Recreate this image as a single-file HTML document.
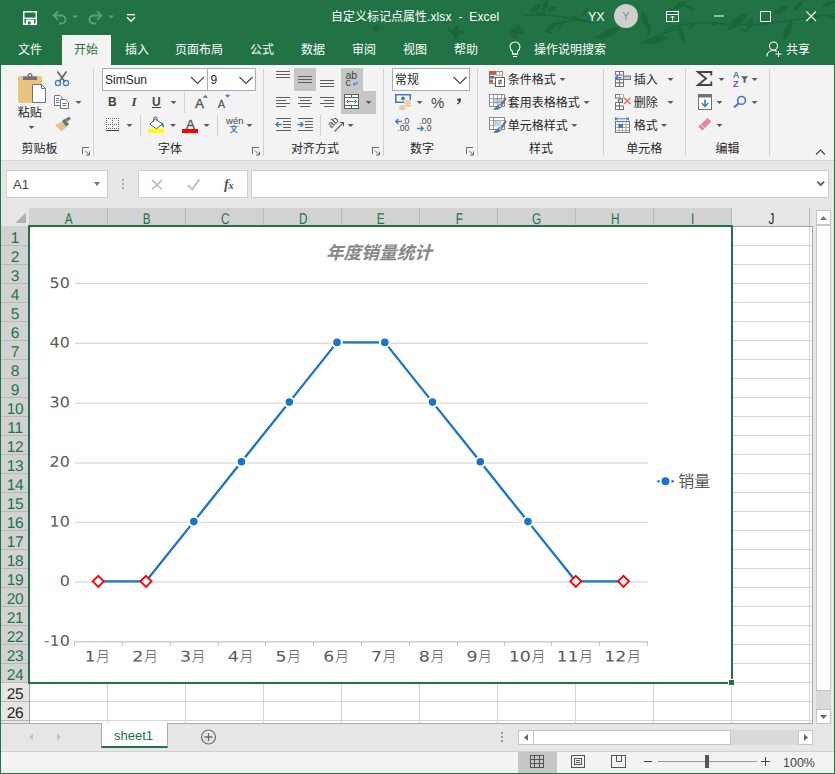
<!DOCTYPE html>
<html lang="zh-CN">
<head>
<meta charset="utf-8">
<title>自定义标记点属性.xlsx - Excel</title>
<style>
*{box-sizing:border-box;margin:0;padding:0}
html,body{width:835px;height:774px;overflow:hidden;background:#e6e6e6}
body{position:relative;font-family:"Liberation Sans","Noto Sans CJK SC",sans-serif;font-size:12px;color:#262626}
.abs{position:absolute}
#win{position:absolute;left:0;top:0;width:835px;height:774px;overflow:hidden}
#title{position:absolute;left:0;top:0;width:835px;height:65px;background:#217346;overflow:hidden}
.tt{position:absolute;color:#fff;font-size:12px;white-space:nowrap;line-height:16px}
.tab{position:absolute;top:41px;color:#fff;font-size:12px;white-space:nowrap;line-height:18px}
#tabact{position:absolute;left:62px;top:35px;width:49px;height:30px;background:#f3f3f3}
#ribbon{position:absolute;left:1px;top:65px;width:833px;height:96px;background:#f3f3f3;border-bottom:1px solid #d6d6d6}
.gl{position:absolute;font-size:12px;color:#444;white-space:nowrap;line-height:16px;top:76px}
.sep{position:absolute;top:7px;width:1px;height:83px;background:#d2d2d2}
.rt{position:absolute;font-size:12px;color:#262626;white-space:nowrap;line-height:16px}
.dd{position:absolute;width:0;height:0;border-left:3px solid transparent;border-right:3px solid transparent;border-top:3px solid #555}
#fbar{position:absolute;left:1px;top:161px;width:833px;height:48px;background:#e6e6e6}
.box{position:absolute;background:#fff;border:1px solid #d0d0d0}
#grid{position:absolute;left:1px;top:208px;width:833px;height:515px;background:#e6e6e6;overflow:visible;z-index:2}
.ch{position:absolute;top:0;height:18px;width:78px;text-align:center;font-size:15.500px;line-height:21px;color:#262626;border-right:1px solid #b8b8b8;overflow:hidden}
.ch span{display:inline-block;transform:translateX(.6px) rotate(0.03deg) scaleX(.76)}
.ch.sel{background:#d2d2d2;color:#217346}
.rh{position:absolute;left:0;width:28px;height:19px;text-align:center;font-size:15.500px;letter-spacing:-.3px;line-height:21px;transform:rotate(0.03deg);color:#262626;border-bottom:1px solid #b8b8b8;overflow:hidden}
.rh.sel{background:#d2d2d2;color:#217346}
#sheetbar{position:absolute;left:1px;top:723px;width:833px;height:29px;background:#e6e6e6;border-bottom:1px solid #cfcfcf}
#status{position:absolute;left:1px;top:752px;width:833px;height:21px;background:#f3f3f3}
</style>
</head>
<body>
<div id="win">
<!-- TITLE -->
<div id="title">
  <!-- leaf decoration -->
  <svg class="abs" style="left:0;top:0" width="835" height="65" viewBox="0 0 835 65">
    <path d="M530.6 12.5Q539.2 11.8 541.4 3.5Q532.8 4.2 530.6 12.5ZM542.6 12.6Q549.7 7.7 547.4 -0.6Q540.3 4.3 542.6 12.6ZM546.4 11.1Q553.5 13.2 557.6 6.9Q550.5 4.8 546.4 11.1ZM535.1 13.0Q540.3 17.9 546.9 15.0Q541.7 10.1 535.1 13.0ZM546.4 30.6Q555.9 30.1 559.6 21.4Q550.1 21.9 546.4 30.6ZM559.0 29.2Q565.5 26.0 565.0 18.8Q558.5 22.0 559.0 29.2ZM544.3 30.3Q547.8 35.3 553.7 33.7Q550.2 28.7 544.3 30.3ZM512.9 34.5Q521.5 35.3 525.1 27.5Q516.5 26.7 512.9 34.5ZM510.9 33.4Q512.1 38.3 517.1 38.6Q515.9 33.7 510.9 33.4ZM596.3 38.9Q612.0 39.3 621.7 27.1Q606.0 26.7 596.3 38.9ZM595.7 35.5Q598.5 40.6 604.3 40.5Q601.5 35.4 595.7 35.5ZM641.6 10.6Q639.4 22.1 648.4 29.4Q650.6 17.9 641.6 10.6ZM650.0 24.1Q645.1 29.3 648.0 35.9Q652.9 30.7 650.0 24.1ZM642.3 42.9Q657.2 45.9 669.7 37.1Q654.8 34.1 642.3 42.9ZM581.8 15.8Q587.7 14.2 588.2 8.2Q582.3 9.8 581.8 15.8ZM571.1 15.8Q573.5 20.6 578.9 20.2Q576.5 15.4 571.1 15.8ZM673.1 9.0Q682.5 9.3 686.9 1.0Q677.5 0.7 673.1 9.0ZM684.4 5.9Q688.6 11.8 695.6 10.1Q691.4 4.2 684.4 5.9ZM669.5 7.7Q668.5 14.0 674.5 16.3Q675.5 10.0 669.5 7.7ZM679.7 26.3Q676.7 36.4 684.3 43.7Q687.3 33.6 679.7 26.3ZM688.2 29.2Q694.2 28.7 695.8 22.8Q689.8 23.3 688.2 29.2ZM727.0 30.4Q742.1 28.1 747.0 13.6Q731.9 15.9 727.0 30.4ZM747.6 30.6Q754.7 25.7 752.4 17.4Q745.3 22.3 747.6 30.6ZM739.1 29.1Q743.4 33.4 748.9 30.9Q744.6 26.6 739.1 29.1ZM783.4 40.0Q793.9 32.7 792.6 20.0Q782.1 27.3 783.4 40.0ZM773.2 14.5Q783.8 14.8 788.8 5.5Q778.2 5.2 773.2 14.5ZM792.3 11.7Q801.5 9.5 803.7 0.3Q794.5 2.5 792.3 11.7ZM821.4 6.4Q829.7 8.7 834.6 1.6Q826.3 -0.7 821.4 6.4ZM824.1 16.0Q829.3 20.9 835.9 18.0Q830.7 13.1 824.1 16.0ZM808.8 23.8Q814.7 22.2 815.2 16.2Q809.3 17.8 808.8 23.8ZM760.7 19.5Q763.2 25.0 769.3 24.5Q766.8 19.0 760.7 19.5ZM710.3 25.7Q716.2 27.3 719.7 22.3Q713.8 20.7 710.3 25.7Z" fill="#1c653c"/>
    <path d="M368 26l6 1 4-3 1 3 6 1-7 2-3 4-1-4zM446 28l7 2 4-6 2 6 6 2-7 3-2 6-3-6zM509 30l6-2 5-4v6l5 4h-9l-3 4z" fill="#1c653c"/>
    <g fill="none" stroke="#1c653c" stroke-width="1.600">
      <path d="M524 16C545 12 565 18 590 22M548 28C560 22 570 20 580 20M665 30C690 20 710 22 735 25C770 26 800 18 835 14M640 44C655 36 668 32 680 28"/>
    </g>
  </svg>
  <div id="tabact"></div>
  <!-- QAT -->
  <svg class="abs" style="left:0;top:0" width="160" height="34" viewBox="0 0 160 34">
    <!-- save -->
    <path d="M23.750 11.750h12.500v12.500h-12.500z" fill="none" stroke="#fff" stroke-width="1.500"/>
    <rect x="24" y="17.600" width="12" height="1.300" fill="#fff"/>
    <rect x="26" y="19.500" width="8" height="5" fill="#fff"/>
    <rect x="28" y="21.500" width="2.500" height="3" fill="#217346"/>
    <!-- undo -->
    <g fill="none" stroke="#5f9c7c" stroke-width="1.900">
      <path d="M54 15.500h7.500a4 4 0 0 1 0 8h-2.500"/>
      <path d="M58 11.200l-4.300 4.300 4.300 4.300"/>
    </g>
    <path d="M72 15.500h6l-3 3z" fill="#5f9c7c"/>
    <!-- redo -->
    <g fill="none" stroke="#5f9c7c" stroke-width="1.900">
      <path d="M101 15.500h-7.500a4 4 0 0 0 0 8h2.500"/>
      <path d="M97 11.200l4.300 4.300-4.300 4.300"/>
    </g>
    <path d="M108 15.500h6l-3 3z" fill="#5f9c7c"/>
    <!-- customize -->
    <rect x="127" y="14" width="8" height="1.300" fill="#fff"/>
    <path d="M127 17.300l4 4 4-4" fill="none" stroke="#fff" stroke-width="1.300"/>
  </svg>
  <div class="tt" style="left:331px;top:9px">自定义标记点属性<span style="letter-spacing:.1px">.xlsx&nbsp; -&nbsp; Excel</span></div>
  <div class="tt" style="left:588px;top:9px;font-size:12.500px">YX</div>
  <div class="abs" style="left:614px;top:4px;width:24px;height:24px;border-radius:12px;background:#d0cfce;color:#7a8a9a;font-size:11px;line-height:24px;text-align:center">Y</div>
  <svg class="abs" style="left:660px;top:0" width="175" height="34" viewBox="660 0 175 34">
    <!-- ribbon display -->
    <rect x="666.500" y="11.500" width="12" height="10" fill="none" stroke="#fff" stroke-width="1"/>
    <path d="M666 14.500h13" stroke="#fff" stroke-width="1"/>
    <path d="M672.500 20.500v-4.500M670.500 18l2-2 2 2" fill="none" stroke="#fff" stroke-width="1"/>
    <!-- min -->
    <rect x="714" y="15.500" width="10" height="1" fill="#fff"/>
    <!-- max -->
    <rect x="760.500" y="11.500" width="10" height="10" fill="none" stroke="#fff" stroke-width="1"/>
    <!-- close -->
    <path d="M806.300 11.300l9.700 9.700M816 11.300l-9.700 9.700" stroke="#fff" stroke-width="1.150"/>
  </svg>
  <!-- tabs -->
  <div class="tab" style="left:18px">文件</div>
  <div class="tab" style="left:74px;color:#217346">开始</div>
  <div class="tab" style="left:125px">插入</div>
  <div class="tab" style="left:175px">页面布局</div>
  <div class="tab" style="left:250px">公式</div>
  <div class="tab" style="left:301px">数据</div>
  <div class="tab" style="left:352px">审阅</div>
  <div class="tab" style="left:403px">视图</div>
  <div class="tab" style="left:454px">帮助</div>
  <svg class="abs" style="left:506px;top:38px" width="20" height="24" viewBox="0 0 20 24">
    <path d="M6.500 13.500c-1.800-1.500-2.500-3-2.500-4.500a5 5 0 0 1 10 0c0 1.500-.7 3-2.500 4.500v2.500h-5z" fill="none" stroke="#fff" stroke-width="1.1"/>
    <path d="M6.500 16h5M7 18.500h4" stroke="#fff" stroke-width="1.1"/>
  </svg>
  <div class="tab" style="left:534px">操作说明搜索</div>
  <svg class="abs" style="left:764px;top:38px" width="22" height="24" viewBox="0 0 22 24">
    <circle cx="9.500" cy="8" r="4" fill="none" stroke="#fff" stroke-width="1.1"/>
    <path d="M3 18.500c0-4 3-6 6.500-6 1.500 0 2.500.4 3.300 1" fill="none" stroke="#fff" stroke-width="1.100"/>
    <path d="M14.500 13v6M11.500 16h6" stroke="#fff" stroke-width="1.1"/>
  </svg>
  <div class="tab" style="left:786px">共享</div>
</div>
<!-- RIBBON -->
<!--RIBBON-BEGIN--><div id="ribbon">
<svg class="abs" style="left:-1px;top:0" width="835" height="96" viewBox="0 65 835 96" font-family="'Liberation Sans','Noto Sans CJK SC',sans-serif" font-size="12" fill="#262626">
<g fill="#d0d0d0">
<rect x="93" y="69" width="1" height="87"/>
<rect x="263" y="69" width="1" height="87"/>
<rect x="383" y="69" width="1" height="87"/>
<rect x="477" y="69" width="1" height="87"/>
<rect x="603" y="69" width="1" height="87"/>
<rect x="685" y="69" width="1" height="87"/>
<rect x="769" y="69" width="1" height="87"/>
<rect x="184" y="92" width="1" height="21"/>
<rect x="140" y="115" width="1" height="21"/>
<rect x="217" y="115" width="1" height="21"/>
<rect x="320" y="115" width="1" height="21"/>
</g>
<rect x="294" y="68" width="22" height="23" fill="#c6c6c6"/>
<path d="M341 68h22v23h13v23h-35z" fill="#c6c6c6"/>
<g fill="#5a5a5a">
<path d="M28.5 126.0h6l-3 3z"/>
<path d="M75.5 101.0h6l-3 3z"/>
<path d="M170.5 101.0h6l-3 3z"/>
<path d="M126.5 124.0h6l-3 3z"/>
<path d="M170.0 124.0h6l-3 3z"/>
<path d="M203.6 124.0h6l-3 3z"/>
<path d="M246.5 124.0h6l-3 3z"/>
<path d="M365.6 101.0h6l-3 3z"/>
<path d="M347.6 124.0h6l-3 3z"/>
<path d="M416.6 101.0h6l-3 3z"/>
<path d="M559.5 78.0h6l-3 3z"/>
<path d="M583.6 101.0h6l-3 3z"/>
<path d="M571.3 124.0h6l-3 3z"/>
<path d="M667.5 78.0h6l-3 3z"/>
<path d="M667.5 101.0h6l-3 3z"/>
<path d="M661.0 124.0h6l-3 3z"/>
<path d="M718.5 78.0h6l-3 3z"/>
<path d="M751.6 78.0h6l-3 3z"/>
<path d="M716.5 101.0h6l-3 3z"/>
<path d="M751.6 101.0h6l-3 3z"/>
<path d="M716.5 124.0h6l-3 3z"/>
</g>
<g fill="none" stroke="#6a6a6a" stroke-width="1">
<path d="M82.5 154v-6.500h6.500M85.0 150.500l4.500 4.500M89.5 151.500v3.500h-3.500"/>
<path d="M252.5 154v-6.500h6.500M255.0 150.500l4.500 4.500M259.5 151.500v3.500h-3.500"/>
<path d="M372.5 154v-6.500h6.500M375.0 150.500l4.500 4.500M379.5 151.500v3.500h-3.500"/>
<path d="M466.5 154v-6.500h6.500M469.0 150.500l4.500 4.500M473.5 151.500v3.500h-3.500"/>
</g>
<path d="M816 154.500l4.500-4.500 4.500 4.500" fill="none" stroke="#444" stroke-width="1.100"/>
<rect x="18" y="76" width="24" height="27" rx="2" fill="#eac282"/>
<path d="M23 80v-3.500h4.500v-1a2.500 2.500 0 0 1 5 0v1h4.500v3.500z" fill="#737373"/>
<circle cx="30" cy="75.300" r="1.100" fill="#f3f3f3"/>
<path d="M32.500 84.500h9l4 4v14h-13z" fill="#fff" stroke="#737373"/>
<path d="M41.500 84.500v4h4" fill="none" stroke="#737373"/>
<text x="17.800" y="116.500">粘贴</text>
<path d="M57.500 71.500l7.500 10.500M66.500 71.500l-7.500 10.500" stroke="#5f5f5f" stroke-width="1.600" fill="none"/>
<circle cx="58" cy="83" r="2.600" fill="none" stroke="#3f7dc1" stroke-width="1.300"/><circle cx="66" cy="83" r="2.600" fill="none" stroke="#3f7dc1" stroke-width="1.300"/>
<path d="M54.500 95.500h5.500l2 2v8h-7.500z" fill="#fff" stroke="#737373"/>
<path d="M60.500 99.500h5l3 3v6h-8z" fill="#fff" stroke="#737373"/>
<path d="M56 98.500h3M56 100.500h3M56 102.500h3M62.500 103.500h4M62.500 105.500h4" stroke="#3f7dc1"/>
<path d="M55 125l9-4.500 3.500 5.500-6 5.500z" fill="#eac282"/>
<path d="M62 121l3-2.500 4 6-3 2z" fill="#737373"/><path d="M65.500 119l3.500-2.500 1.800 2.600-3.500 2.500z" fill="#737373"/>
<text x="21.500" y="152.800">剪贴板</text>
<rect x="102.500" y="68.500" width="105" height="22" fill="#fff" stroke="#ababab"/>
<rect x="207.500" y="68.500" width="48" height="22" fill="#fff" stroke="#ababab"/>
<path d="M191 77l6.500 6.500 6.500-6.500M239.500 77l6.500 6.500 6.500-6.500" fill="none" stroke="#444" stroke-width="1.100"/>
<text x="105" y="84">SimSun</text><text x="210.500" y="84">9</text>
<g fill="#444">
<text x="108" y="105.800" font-weight="bold" font-size="12">B</text>
<text x="131.500" y="105.800" font-style="italic" font-size="13" font-family="'Liberation Serif',serif" font-weight="bold">I</text>
<text x="152" y="105.800" font-weight="bold" font-size="12">U</text>
<rect x="152" y="107" width="9" height="1"/>
</g>
<text x="195" y="107.800" font-size="13.500" fill="#5a5a5a" stroke="#5a5a5a" stroke-width=".35">A</text>
<text x="217.700" y="107.800" font-size="11" fill="#5a5a5a" stroke="#5a5a5a" stroke-width=".3">A</text>
<path d="M202.800 97.800h5.200l-2.600-3z" fill="#3f7dc1"/><path d="M225 94.800h5.200l-2.600 3z" fill="#3f7dc1"/>
<g stroke="#6a6a6a" stroke-width="1" stroke-dasharray="1 1" fill="none"><path d="M106.500 118v11M112.500 118v11M118.500 118v11M106 118.500h13M106 124.500h13M106 128.500h13"/></g>
<rect x="106" y="130" width="13" height="1" fill="#444"/>
<path d="M155.200 118.800l7 5.300-5.800 4.800-6.400-4.700z" fill="#fff" stroke="#5a5a5a"/>
<path d="M153.700 122v-3.500a1.600 1.600 0 0 1 3.200 0v2" fill="none" stroke="#5a5a5a"/>
<path d="M161.600 122c1.800 1.200 2.600 3 2.300 5.400-1.400-.6-2.300-1.600-2.500-3.200z" fill="#3f7dc1"/>
<rect x="148" y="129" width="16" height="4" fill="#ffff00"/>
<text x="190.500" y="128.800" font-size="13.500" fill="#5a5a5a" text-anchor="middle" stroke="#5a5a5a" stroke-width=".35">A</text>
<rect x="182" y="129" width="16" height="4" fill="#ff0000"/>
<text x="234.800" y="124" font-size="9.500" fill="#444" text-anchor="middle">wén</text>
<text x="233.800" y="132.300" font-size="8" fill="#3f7dc1" text-anchor="middle" font-weight="bold">文</text>
<text x="158" y="152.800">字体</text>
<g stroke="#5f5f5f" stroke-width="1" fill="none">
<path d="M276 71.500h14M276 74.500h14M276 77.500h14"/>
<path d="M298 76.500h14M298 79.500h14M298 82.500h14"/>
<path d="M320 80.500h14M320 83.500h14M320 86.500h14"/>
<path d="M276 97.500h14M276 100.500h10M276 103.500h14M276 106.500h10"/>
<path d="M298 97.500h14M300 100.500h10M298 103.500h14M300 106.500h10"/>
<path d="M320 97.500h14M324 100.500h10M320 103.500h14M324 106.500h10"/>
<path d="M276 118.500h15M283 121.500h8M283 124.500h8M283 127.500h8M276 130.500h15"/>
<path d="M298 118.500h15M305 121.500h8M305 124.500h8M305 127.500h8M298 130.500h15"/>
</g>
<g stroke="#3f7dc1" stroke-width="1.300" fill="none"><path d="M281.500 124.500h-5.500M278.500 122l-2.500 2.500 2.500 2.500"/><path d="M297.500 124.500h5.500M300.500 122l2.500 2.500-2.500 2.500"/></g>
<text x="345.500" y="78.600" font-size="10.500" fill="#444">ab</text><text x="345.500" y="85.700" font-size="10.500" fill="#444">c</text>
<path d="M357 81.500v2.500h-3.500M355 82.500l-1.700 1.500 1.700 1.500" fill="none" stroke="#3f7dc1" stroke-width="1"/>
<rect x="344.500" y="94.500" width="14" height="14" fill="#fff" stroke="#5f5f5f"/>
<path d="M344.500 97.500h14M344.500 105.500h14M351.500 94.500v3M351.500 105.500v3" stroke="#5f5f5f" fill="none"/>
<path d="M346.500 101.500h10M348.500 99.500l-2 2 2 2M354.500 99.500l2 2-2 2" fill="none" stroke="#3f7dc1" stroke-width="1"/>
<text transform="translate(331.300,128.500) rotate(-45)" font-size="10" fill="#444">ab</text>
<path d="M334.500 131.500l9-9M339.800 122.500h3.700v3.700" fill="none" stroke="#5f5f5f" stroke-width="1.100"/>
<text x="291" y="152.800">对齐方式</text>
<rect x="392.500" y="68.500" width="77" height="22" fill="#fff" stroke="#ababab"/>
<path d="M453.500 77l6.500 6.500 6.500-6.500" fill="none" stroke="#444" stroke-width="1.100"/>
<text x="395" y="84.300">常规</text>
<path d="M395.800 94.800h14.400v7.400h-14.400z" fill="#fff" stroke="#3f7dc1" stroke-width="1.600"/>
<path d="M395 94h2.500l-2.500 2.500zM411 94h-2.500l2.500 2.500zM395 103h2.500l-2.500-2.500z" fill="#3f7dc1"/>
<circle cx="403" cy="98.500" r="2" fill="#3f7dc1"/>
<g fill="#eac282" stroke="#f3f3f3" stroke-width=".7"><ellipse cx="407.600" cy="101.200" rx="3.600" ry="1.500"/><ellipse cx="407.600" cy="103.400" rx="3.600" ry="1.500"/><ellipse cx="407.600" cy="105.600" rx="3.600" ry="1.500"/><ellipse cx="402.300" cy="106.400" rx="3.600" ry="1.500"/><ellipse cx="402.300" cy="108.600" rx="3.600" ry="1.500"/></g>
<text x="431" y="107.800" font-size="15" fill="#444">%</text>
<path d="M457.500 98.500h3.500c.3 2.800-.8 4.800-3.600 6l-.6-1c1.400-.6 2.100-1.400 2.100-2.400h-1.400z" fill="#444"/>
<g font-size="8.700" fill="#444" text-anchor="end"><text x="409.300" y="123.600">.0</text><text x="409.300" y="130.700">.00</text><text x="431.500" y="123.600">.00</text><text x="431.500" y="130.700">.0</text></g>
<path d="M402 121.500h-6M398.300 119l-2.600 2.500 2.600 2.500" fill="none" stroke="#3f7dc1" stroke-width="1.300"/>
<path d="M417 128.500h6M420.700 126l2.600 2.500-2.600 2.500" fill="none" stroke="#3f7dc1" stroke-width="1.300"/>
<text x="410" y="152.800">数字</text>
<rect x="489.500" y="71.500" width="13" height="12" fill="#fff" stroke="#8a8a8a"/>
<path d="M496.500 71.500v4M499.500 71.500v4M496 75.500h7" stroke="#b5b5b5" fill="none"/>
<rect x="489" y="71" width="7" height="3.800" fill="#d8553a"/><rect x="489" y="75.800" width="5.500" height="2.800" fill="#3f7dc1"/><rect x="489" y="79.600" width="4" height="3.200" fill="#d8553a"/>
<rect x="495.500" y="77.500" width="9" height="9" fill="#fff" stroke="#5f5f5f"/>
<path d="M498 80.800h4M498 83.200h4M501 79.500l-2 5" stroke="#444" stroke-width=".9" fill="none"/>
<rect x="489.500" y="94.5" width="15" height="12" fill="#fff" stroke="#8a8a8a"/>
<rect x="493" y="98.0" width="8" height="5.500" fill="#bdd3ea"/>
<path d="M489.500 98.500h15M489.500 102.500h15M493.500 94.500v12M497.500 94.500v12M501.500 94.500v12" stroke="#8a8a8a" fill="none" opacity=".75"/>
<path d="M505.500 97.0l-5 6.800 2 1.600 4-6.500z" fill="#737373"/>
<path d="M500 104.0c-2.500.4-3.200 3-7 5.400 3.500 1.200 7.600.2 9.600-3.600z" fill="#3f7dc1"/>
<circle cx="500" cy="106.1" r=".9" fill="#fff"/>
<rect x="489.500" y="117.5" width="15" height="12" fill="#fff" stroke="#8a8a8a"/>
<rect x="493" y="121.0" width="8" height="5.500" fill="#bdd3ea"/>
<path d="M489.500 120.500h15M493.500 117.500v12M489.500 125.500h4" stroke="#8a8a8a" fill="none" opacity=".75"/>
<path d="M505.500 120.0l-5 6.800 2 1.600 4-6.500z" fill="#737373"/>
<path d="M500 127.0c-2.500.4-3.200 3-7 5.400 3.500 1.200 7.600.2 9.600-3.600z" fill="#3f7dc1"/>
<circle cx="500" cy="129.1" r=".9" fill="#fff"/>
<text x="507.800" y="83.800">条件格式</text><text x="507.800" y="106.800">套用表格格式</text><text x="507.800" y="129.800">单元格样式</text>
<text x="529" y="152.800">样式</text>
<g fill="#fff" stroke="#737373">
<rect x="615.500" y="71.500" width="4" height="3.500"/><rect x="619.500" y="71.500" width="4" height="3.500"/>
<rect x="615.500" y="79.500" width="4" height="3.500"/><rect x="619.500" y="79.500" width="4" height="3.500"/><rect x="615.500" y="83" width="4" height="3.500"/><rect x="619.500" y="83" width="4" height="3.500"/>
<rect x="623.500" y="76" width="7" height="3.500" fill="#bdd3ea"/>
</g>
<path d="M621.500 77.800h-6M618 75.300l-2.600 2.500 2.600 2.500" fill="none" stroke="#3f7dc1" stroke-width="1.400"/>
<g fill="#fff" stroke="#737373">
<rect x="615.500" y="94.500" width="4" height="3.500"/><rect x="619.500" y="94.500" width="4" height="3.500" stroke-dasharray="1 1"/>
<rect x="615.500" y="102.500" width="4" height="3.500"/><rect x="615.500" y="106" width="4" height="3.500"/><rect x="619.500" y="106" width="4" height="3.500"/>
<rect x="618.500" y="99" width="4" height="3.500" fill="#bdd3ea"/>
</g>
<path d="M624 97.800l6.500 6.200M630.500 97.800l-6.500 6.200" stroke="#e0714f" stroke-width="1.500" fill="none"/>
<rect x="615.500" y="121.500" width="14" height="11" fill="#fff" stroke="#737373"/>
<path d="M615.500 124.500h14M615.500 127.500h14M615.500 130.500h14M619 121.500v11M622.500 121.500v11M626 121.500v11" stroke="#8a8a8a" fill="none" opacity=".7"/>
<rect x="618.500" y="124" width="4.500" height="4" fill="#3f7dc1"/>
<path d="M615.500 118.800h13M615.500 117.300v3M628.500 117.300v3M617.500 117.500l-1.500 1.300 1.500 1.300M626.500 117.500l1.500 1.300-1.500 1.300" stroke="#3f7dc1" fill="none"/>
<text x="633.700" y="83.800">插入</text><text x="633.700" y="106.800">删除</text><text x="633.700" y="129.800">格式</text>
<text x="626.300" y="152.800">单元格</text>
<path d="M711.300 75.500v-3.500h-13.300l8 6.500-8 6.500h13.300v-3.500" fill="none" stroke="#444" stroke-width="1.900" stroke-linejoin="miter"/>
<text x="732.700" y="77.600" font-size="9.200" font-weight="bold" fill="#3f7dc1">A</text><text x="733" y="86.900" font-size="9.200" font-weight="bold" fill="#8b44ac">Z</text>
<path d="M741 76.300h7.200l-2.600 3v3.400h-2v-3.400z" fill="#5f5f5f"/>
<rect x="698.500" y="94.500" width="13" height="15" fill="#fff" stroke="#737373"/><rect x="698" y="94" width="14" height="3.500" fill="#737373"/>
<path d="M705 99.500v7M701.700 103l3.300 3.600 3.300-3.600" fill="none" stroke="#3f7dc1" stroke-width="1.600"/>
<circle cx="741.500" cy="100.400" r="3.900" fill="none" stroke="#3f7dc1" stroke-width="1.600"/><path d="M738.800 103.300l-4.800 4" stroke="#3f7dc1" stroke-width="2.100"/>
<path d="M707.600 118l3.600 3.500-8.600 9-4.400-3.700z" fill="#e8849a"/><path d="M700.300 124.200l4.300 4" stroke="#f3f3f3" stroke-width=".9"/>
<text x="715.500" y="152.800">编辑</text>
</svg>
</div><!--RIBBON-END-->
<!-- FORMULA BAR -->
<div id="fbar">
<div class="box" style="left:5px;top:9px;width:102px;height:28px"></div>
<div class="rt" style="left:12px;top:16px;font-size:13px;color:#444">A1</div>
<div class="dd" style="left:93px;top:21px;border-left-width:3.5px;border-right-width:3.5px;border-top:4px solid #777"></div>
<div class="abs" style="left:121px;top:18px;width:2px;height:2px;background:#b0b0b0;box-shadow:0 4px 0 #b0b0b0,0 8px 0 #b0b0b0"></div>
<div class="box" style="left:137px;top:9px;width:110px;height:28px"></div>
<svg class="abs" style="left:137px;top:9px" width="110" height="28" viewBox="0 0 110 28">
  <path d="M14 10.200l10 9.300M24 10.200l-10 9.300" stroke="#bdbdbd" stroke-width="1.700" fill="none"/>
  <path d="M50 15l4 4.300 7.500-10" stroke="#c4c4c4" stroke-width="2.200" fill="none"/>
</svg>
<div class="rt" style="left:223px;top:15px;font-size:14.500px;font-style:italic;font-family:'Liberation Serif',serif;color:#555;letter-spacing:-.5px;font-weight:bold">f<span style="font-size:11px">x</span></div>
<div class="box" style="left:250px;top:9px;width:578px;height:28px"></div>
<svg class="abs" style="left:813px;top:17px" width="14" height="12" viewBox="0 0 14 12"><path d="M3.300 3.600l3.400 3.400 3.400-3.400" fill="none" stroke="#666" stroke-width="2"/></svg>
</div>
<!-- GRID -->
<!--GRID-BEGIN--><div id="grid">
<div class="abs" style="left:29px;top:19px;width:783px;height:496px;background:#fff"></div>
<div class="ch sel" style="left:28px;width:79px"><span>A</span></div>
<div class="ch sel" style="left:107px;width:78px"><span>B</span></div>
<div class="ch sel" style="left:185px;width:78px"><span>C</span></div>
<div class="ch sel" style="left:263px;width:78px"><span>D</span></div>
<div class="ch sel" style="left:341px;width:78px"><span>E</span></div>
<div class="ch sel" style="left:419px;width:78px"><span>F</span></div>
<div class="ch sel" style="left:497px;width:78px"><span>G</span></div>
<div class="ch sel" style="left:575px;width:78px"><span>H</span></div>
<div class="ch sel" style="left:653px;width:78px"><span>I</span></div>
<div class="ch" style="left:731px;width:78px"><span>J</span></div>
<div class="rh sel" style="top:18px;height:20px;line-height:23px">1</div>
<div class="rh sel" style="top:38px;height:19px">2</div>
<div class="rh sel" style="top:57px;height:19px">3</div>
<div class="rh sel" style="top:76px;height:19px">4</div>
<div class="rh sel" style="top:95px;height:19px">5</div>
<div class="rh sel" style="top:114px;height:19px">6</div>
<div class="rh sel" style="top:133px;height:19px">7</div>
<div class="rh sel" style="top:152px;height:19px">8</div>
<div class="rh sel" style="top:171px;height:19px">9</div>
<div class="rh sel" style="top:190px;height:19px">10</div>
<div class="rh sel" style="top:209px;height:19px">11</div>
<div class="rh sel" style="top:228px;height:19px">12</div>
<div class="rh sel" style="top:247px;height:19px">13</div>
<div class="rh sel" style="top:266px;height:19px">14</div>
<div class="rh sel" style="top:285px;height:19px">15</div>
<div class="rh sel" style="top:304px;height:19px">16</div>
<div class="rh sel" style="top:323px;height:19px">17</div>
<div class="rh sel" style="top:342px;height:19px">18</div>
<div class="rh sel" style="top:361px;height:19px">19</div>
<div class="rh sel" style="top:380px;height:19px">20</div>
<div class="rh sel" style="top:399px;height:19px">21</div>
<div class="rh sel" style="top:418px;height:19px">22</div>
<div class="rh sel" style="top:437px;height:19px">23</div>
<div class="rh sel" style="top:456px;height:19px">24</div>
<div class="rh" style="top:475px;height:19px">25</div>
<div class="rh" style="top:494px;height:19px">26</div>
<svg class="abs" style="left:0;top:0" width="833" height="515"><g fill="#d4d4d4"><rect x="29" y="37" width="783" height="1"/><rect x="29" y="56" width="783" height="1"/><rect x="29" y="75" width="783" height="1"/><rect x="29" y="94" width="783" height="1"/><rect x="29" y="113" width="783" height="1"/><rect x="29" y="132" width="783" height="1"/><rect x="29" y="151" width="783" height="1"/><rect x="29" y="170" width="783" height="1"/><rect x="29" y="189" width="783" height="1"/><rect x="29" y="208" width="783" height="1"/><rect x="29" y="227" width="783" height="1"/><rect x="29" y="246" width="783" height="1"/><rect x="29" y="265" width="783" height="1"/><rect x="29" y="284" width="783" height="1"/><rect x="29" y="303" width="783" height="1"/><rect x="29" y="322" width="783" height="1"/><rect x="29" y="341" width="783" height="1"/><rect x="29" y="360" width="783" height="1"/><rect x="29" y="379" width="783" height="1"/><rect x="29" y="398" width="783" height="1"/><rect x="29" y="417" width="783" height="1"/><rect x="29" y="436" width="783" height="1"/><rect x="29" y="455" width="783" height="1"/><rect x="29" y="474" width="783" height="1"/><rect x="29" y="493" width="783" height="1"/><rect x="29" y="512" width="783" height="1"/><rect x="106" y="19" width="1" height="496"/><rect x="184" y="19" width="1" height="496"/><rect x="262" y="19" width="1" height="496"/><rect x="340" y="19" width="1" height="496"/><rect x="418" y="19" width="1" height="496"/><rect x="496" y="19" width="1" height="496"/><rect x="574" y="19" width="1" height="496"/><rect x="652" y="19" width="1" height="496"/><rect x="730" y="19" width="1" height="496"/><rect x="808" y="19" width="1" height="496"/></g><rect x="29" y="18" width="783" height="1" fill="#9e9e9e"/><rect x="28" y="19" width="1" height="496" fill="#9e9e9e"/><rect x="811" y="18" width="1" height="497" fill="#a6a6a6"/><path d="M25 4.500v10.500h-10.500z" fill="#b1b1b1"/></svg>
<!--CHART-BEGIN--><svg class="abs" style="left:-1px;top:-208px" width="835" height="774" viewBox="0 0 835 774" font-family="'DejaVu Sans','Noto Sans CJK SC',sans-serif">
<rect x="30" y="227" width="701" height="455" fill="#fff"/>
<rect x="75" y="282.75" width="573" height="1.3" fill="#d9d9d9"/>
<rect x="75" y="342.65" width="573" height="1.3" fill="#d9d9d9"/>
<rect x="75" y="402.55" width="573" height="1.3" fill="#d9d9d9"/>
<rect x="75" y="462.35" width="573" height="1.3" fill="#d9d9d9"/>
<rect x="75" y="521.65" width="573" height="1.3" fill="#d9d9d9"/>
<rect x="75" y="581.25" width="573" height="1.3" fill="#d9d9d9"/>
<rect x="75" y="641.15" width="573" height="1.3" fill="#c6c6c6"/>
<rect x="74" y="641" width="1" height="5" fill="#c6c6c6"/>
<rect x="122" y="641" width="1" height="5" fill="#c6c6c6"/>
<rect x="170" y="641" width="1" height="5" fill="#c6c6c6"/>
<rect x="218" y="641" width="1" height="5" fill="#c6c6c6"/>
<rect x="265" y="641" width="1" height="5" fill="#c6c6c6"/>
<rect x="313" y="641" width="1" height="5" fill="#c6c6c6"/>
<rect x="361" y="641" width="1" height="5" fill="#c6c6c6"/>
<rect x="409" y="641" width="1" height="5" fill="#c6c6c6"/>
<rect x="457" y="641" width="1" height="5" fill="#c6c6c6"/>
<rect x="504" y="641" width="1" height="5" fill="#c6c6c6"/>
<rect x="551" y="641" width="1" height="5" fill="#c6c6c6"/>
<rect x="599" y="641" width="1" height="5" fill="#c6c6c6"/>
<rect x="647" y="641" width="1" height="5" fill="#c6c6c6"/>
<text transform="translate(69.800,287.9) rotate(0.03) scale(1.10,1.00)" text-anchor="end" font-size="14.5" fill="#595959">50</text>
<text transform="translate(69.800,347.5) rotate(0.03) scale(1.10,1.00)" text-anchor="end" font-size="14.5" fill="#595959">40</text>
<text transform="translate(69.800,407.2) rotate(0.03) scale(1.10,1.00)" text-anchor="end" font-size="14.5" fill="#595959">30</text>
<text transform="translate(69.800,466.8) rotate(0.03) scale(1.10,1.00)" text-anchor="end" font-size="14.5" fill="#595959">20</text>
<text transform="translate(69.800,526.5) rotate(0.03) scale(1.10,1.00)" text-anchor="end" font-size="14.5" fill="#595959">10</text>
<text transform="translate(69.800,586.1) rotate(0.03) scale(1.10,1.00)" text-anchor="end" font-size="14.5" fill="#595959">0</text>
<text transform="translate(69.800,645.8) rotate(0.03) scale(1.10,1.00)" text-anchor="end" font-size="14.5" fill="#595959">-10</text>
<text transform="translate(84.4,661.500) rotate(0.03) scale(1.20,1.00)" font-size="14.5" fill="#595959">1</text>
<text x="96.1" y="660.700" font-size="14" font-weight="300" fill="#555" font-family="'Noto Sans CJK SC',sans-serif">月</text>
<text transform="translate(132.2,661.500) rotate(0.03) scale(1.20,1.00)" font-size="14.5" fill="#595959">2</text>
<text x="143.9" y="660.700" font-size="14" font-weight="300" fill="#555" font-family="'Noto Sans CJK SC',sans-serif">月</text>
<text transform="translate(179.9,661.500) rotate(0.03) scale(1.20,1.00)" font-size="14.5" fill="#595959">3</text>
<text x="191.6" y="660.700" font-size="14" font-weight="300" fill="#555" font-family="'Noto Sans CJK SC',sans-serif">月</text>
<text transform="translate(227.7,661.500) rotate(0.03) scale(1.20,1.00)" font-size="14.5" fill="#595959">4</text>
<text x="239.4" y="660.700" font-size="14" font-weight="300" fill="#555" font-family="'Noto Sans CJK SC',sans-serif">月</text>
<text transform="translate(275.4,661.500) rotate(0.03) scale(1.20,1.00)" font-size="14.5" fill="#595959">5</text>
<text x="287.1" y="660.700" font-size="14" font-weight="300" fill="#555" font-family="'Noto Sans CJK SC',sans-serif">月</text>
<text transform="translate(323.2,661.500) rotate(0.03) scale(1.20,1.00)" font-size="14.5" fill="#595959">6</text>
<text x="334.9" y="660.700" font-size="14" font-weight="300" fill="#555" font-family="'Noto Sans CJK SC',sans-serif">月</text>
<text transform="translate(370.9,661.500) rotate(0.03) scale(1.20,1.00)" font-size="14.5" fill="#595959">7</text>
<text x="382.6" y="660.700" font-size="14" font-weight="300" fill="#555" font-family="'Noto Sans CJK SC',sans-serif">月</text>
<text transform="translate(418.7,661.500) rotate(0.03) scale(1.20,1.00)" font-size="14.5" fill="#595959">8</text>
<text x="430.4" y="660.700" font-size="14" font-weight="300" fill="#555" font-family="'Noto Sans CJK SC',sans-serif">月</text>
<text transform="translate(466.4,661.500) rotate(0.03) scale(1.20,1.00)" font-size="14.5" fill="#595959">9</text>
<text x="478.1" y="660.700" font-size="14" font-weight="300" fill="#555" font-family="'Noto Sans CJK SC',sans-serif">月</text>
<text transform="translate(508.7,661.500) rotate(0.03) scale(1.20,1.00)" font-size="14.5" fill="#595959">10</text>
<text x="531.4" y="660.700" font-size="14" font-weight="300" fill="#555" font-family="'Noto Sans CJK SC',sans-serif">月</text>
<text transform="translate(556.4,661.500) rotate(0.03) scale(1.20,1.00)" font-size="14.5" fill="#595959">11</text>
<text x="579.1" y="660.700" font-size="14" font-weight="300" fill="#555" font-family="'Noto Sans CJK SC',sans-serif">月</text>
<text transform="translate(604.2,661.500) rotate(0.03) scale(1.20,1.00)" font-size="14.5" fill="#595959">12</text>
<text x="626.9" y="660.700" font-size="14" font-weight="300" fill="#555" font-family="'Noto Sans CJK SC',sans-serif">月</text>
<text x="379" y="258.500" text-anchor="middle" font-size="17.700" font-weight="bold" font-style="italic" fill="#878787" font-family="'Noto Sans CJK SC',sans-serif">年度销量统计</text>
<polyline points="98.3,581.3 146.0,581.3 193.8,521.6 241.5,461.8 289.3,402.1 337.0,342.4 384.8,342.4 432.5,402.1 480.3,461.8 528.0,521.6 575.8,581.3 623.5,581.3" fill="none" stroke="#1874cd" stroke-width="2.300" stroke-linejoin="round"/>
<path d="M98.3 575.8l5.5 5.5-5.5 5.5-5.5-5.5z" fill="#fff" stroke="#ff0000" stroke-width="1.900"/>
<path d="M146.0 575.8l5.5 5.5-5.5 5.5-5.5-5.5z" fill="#fff" stroke="#ff0000" stroke-width="1.900"/>
<circle cx="193.8" cy="521.6" r="4.800" fill="#1874cd" stroke="#fff" stroke-width="2"/>
<circle cx="241.5" cy="461.8" r="4.800" fill="#1874cd" stroke="#fff" stroke-width="2"/>
<circle cx="289.3" cy="402.1" r="4.800" fill="#1874cd" stroke="#fff" stroke-width="2"/>
<circle cx="337.0" cy="342.4" r="4.800" fill="#1874cd" stroke="#fff" stroke-width="2"/>
<circle cx="384.8" cy="342.4" r="4.800" fill="#1874cd" stroke="#fff" stroke-width="2"/>
<circle cx="432.5" cy="402.1" r="4.800" fill="#1874cd" stroke="#fff" stroke-width="2"/>
<circle cx="480.3" cy="461.8" r="4.800" fill="#1874cd" stroke="#fff" stroke-width="2"/>
<circle cx="528.0" cy="521.6" r="4.800" fill="#1874cd" stroke="#fff" stroke-width="2"/>
<path d="M575.8 575.8l5.5 5.5-5.5 5.5-5.5-5.5z" fill="#fff" stroke="#ff0000" stroke-width="1.900"/>
<path d="M623.5 575.8l5.5 5.5-5.5 5.5-5.5-5.5z" fill="#fff" stroke="#ff0000" stroke-width="1.900"/>
<path d="M658 481.300h15" stroke="#1874cd" stroke-width="2.200" stroke-linecap="round"/><circle cx="665.500" cy="481.300" r="5" fill="#1874cd" stroke="#fff" stroke-width="2"/>
<text x="678.300" y="486.800" font-size="16" fill="#595959" font-family="'Noto Sans CJK SC',sans-serif">销量</text>
<path d="M29 226h703v457h-703z" fill="none" stroke="#217346" stroke-width="2"/>
<rect x="728" y="679" width="7" height="7" fill="#fff"/><rect x="729" y="680" width="5" height="5" fill="#217346"/>
</svg><!--CHART-END-->
<div class="abs" style="left:812px;top:0;width:21px;height:515px;background:#e6e6e6"></div>
<div class="abs" style="left:815px;top:2px;width:15px;height:15px;background:#fff;border:1px solid #c6c6c6"></div>
<div class="abs" style="left:815px;top:17px;width:15px;height:466px;background:#fff;border:1px solid #c6c6c6"></div>
<div class="abs" style="left:815px;top:483px;width:15px;height:18px;background:#d9d9d9"></div>
<div class="abs" style="left:815px;top:501px;width:15px;height:15px;background:#fff;border:1px solid #c6c6c6"></div>
<svg class="abs" style="left:815px;top:2px" width="15" height="513"><path d="M4 10h7l-3.500-4z" fill="#777"/><path d="M4 505h7l-3.500 4z" fill="#666"/></svg>
</div><!--GRID-END-->
<!-- SHEETBAR -->
<div id="sheetbar">
<svg class="abs" style="left:0;top:0" width="833" height="30">
  <rect x="0" y="0" width="812" height="1" fill="#ababab"/>
  <path d="M32 10.500l-4 3.500 4 3.500z" fill="#c3c3c3"/><path d="M56 10.500l4 3.500-4 3.500z" fill="#c3c3c3"/>
  <circle cx="207.500" cy="14" r="7" fill="none" stroke="#6a6a6a" stroke-width="1.200"/>
  <path d="M203.500 14h8M207.500 10v8" stroke="#6a6a6a" stroke-width="1.300"/>
  <g fill="#9a9a9a"><rect x="500" y="9" width="2" height="2"/><rect x="500" y="13" width="2" height="2"/><rect x="500" y="17" width="2" height="2"/></g>
  <rect x="517.500" y="7.500" width="15" height="14" fill="#fff" stroke="#c6c6c6"/>
  <rect x="532.500" y="7.500" width="197" height="14" fill="#fff" stroke="#c6c6c6"/>
  <rect x="730" y="7" width="67" height="15" fill="#d9d9d9"/>
  <rect x="797.500" y="7.500" width="14" height="14" fill="#fff" stroke="#c6c6c6"/>
  <path d="M527 11v7l-4-3.500z" fill="#666"/><path d="M803 11v7l4-3.500z" fill="#666"/>
</svg>
<div class="abs" style="left:100px;top:0;width:67px;height:25px;background:#fff;border-left:1px solid #ababab;border-right:1px solid #ababab;border-bottom:2px solid #217346"></div>
<div class="rt" style="left:113px;top:5px;font-size:13px;color:#217346">sheet1</div>
</div>
<!-- STATUS -->
<div id="status">
<div class="abs" style="left:517px;top:0;width:39px;height:21px;background:#c6c6c6"></div>
<svg class="abs" style="left:0;top:0" width="833" height="21">
  <g fill="none" stroke="#555" stroke-width="1">
    <rect x="529.500" y="3.500" width="13" height="12"/><path d="M529.500 7.500h13M529.500 11.500h13M533.500 3.500v12M538.500 3.500v12"/>
    <rect x="570.500" y="3.500" width="13" height="12"/><rect x="573.500" y="6.500" width="7" height="6"/><path d="M575 8.500h4M575 10.500h4"/>
    <rect x="610.500" y="3.500" width="14" height="12"/><path d="M615.500 3.500v6h5v-6"/>
  </g>
  <rect x="643" y="9" width="8" height="1" fill="#333"/>
  <rect x="657" y="9" width="99" height="1" fill="#9a9a9a"/>
  <rect x="704" y="3" width="4" height="13" fill="#555"/>
  <path d="M760 9.500h9M764.500 5v9" stroke="#444" stroke-width="1"/>
</svg>
<div class="rt" style="left:782px;top:3px;font-size:12.500px;color:#444">100%</div>
</div>
<!-- window border -->
<div class="abs" style="left:0;top:0;width:1px;height:774px;background:#217346"></div>
<div class="abs" style="left:834px;top:0;width:1px;height:774px;background:#217346"></div>
<div class="abs" style="left:0;top:773px;width:835px;height:1px;background:#217346"></div>
</div>
</body>
</html>
